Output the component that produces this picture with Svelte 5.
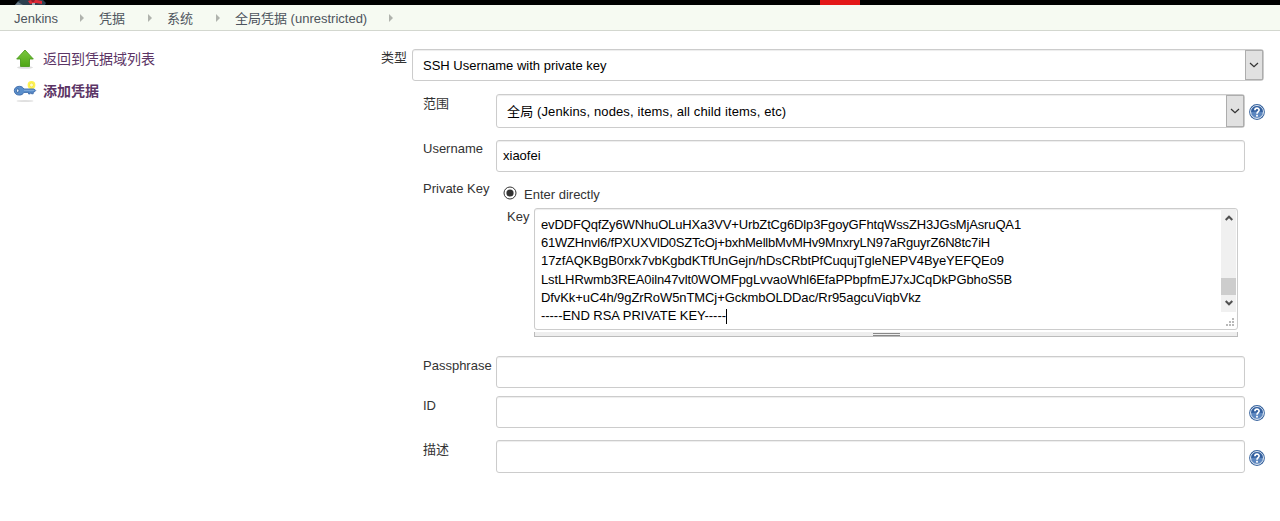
<script>
  const crumbs = [
    { label: 'Jenkins', width: 66 },
    { label: '凭据', width: 49 },
    { label: '系统', width: 49 },
    { label: '全局凭据 (unrestricted)', width: 154 }
  ];
  const keyLines = [
    { text: 'evDDFQqfZy6WNhuOLuHXa3VV+UrbZtCg6Dlp3FgoyGFhtqWssZH3JGsMjAsruQA1', width: 480 },
    { text: '61WZHnvl6/fPXUXVlD0SZTcOj+bxhMellbMvMHv9MnxryLN97aRguyrZ6N8tc7iH', width: 449 },
    { text: '17zfAQKBgB0rxk7vbKgbdKTfUnGejn/hDsCRbtPfCuqujTgleNEPV4ByeYEFQEo9', width: 463 },
    { text: 'LstLHRwmb3REA0iln47vlt0WOMFpgLvvaoWhl6EfaPPbpfmEJ7xJCqDkPGbhoS5B', width: 471 },
    { text: 'DfvKk+uC4h/9gZrRoW5nTMCj+GckmbOLDDac/Rr95agcuViqbVkz', width: 380 },
    { text: '-----END RSA PRIVATE KEY-----', width: 185 }
  ];

  // Spreads letter spacing so a line takes its nominal width.
  function fit(node, width) {
    const natural = node.getBoundingClientRect().width;
    node.style.letterSpacing = (width - natural) / node.textContent.length + 'px';
  }
</script>

{#snippet help()}
  <svg class="help" width="16" height="16" viewBox="0 0 16 16">
    <circle cx="8" cy="8" r="7.9" fill="#3a659f" />
    <circle cx="8" cy="8" r="6.4" fill="#5c86bf" stroke="#eef3f9" stroke-width="1" />
    <path d="M2.1 8a5.9 5.9 0 0 1 11.8 0Q8 7 2.1 8z" fill="#325f9f" />
    <path d="M5.9 6.2C5.900 3.500 10.100 3.500 10.100 6.100C10.100 7.700 8 7.600 8 9.800" fill="none" stroke="#fff" stroke-width="1.7" />
    <rect x="7.100" y="10.800" width="1.800" height="1.800" fill="#fff" />
  </svg>
{/snippet}

{#snippet chevron()}
  <span class="drop">
    <svg width="10" height="6" viewBox="0 0 10 6"><path d="M1 1l4 3.7L9 1" fill="none" stroke="#333" stroke-width="1.2" /></svg>
  </span>
{/snippet}

<div class="page">
  <header>
    <svg class="logo" width="34" height="5" viewBox="0 0 34 5">
      <path d="M1 5L4 1L6 0H29L32 3L31 5z" fill="#2c4050" />
      <path d="M1 5L4 2L9 5z" fill="#6c7c88" />
      <path d="M14 1l3-1h6l5 1v3l-6-1-6 1z" fill="#df2936" />
      <path d="M17 0h4l-1 2h-2z" fill="#931b29" />
      <path d="M18 3h3v2h-3z" fill="#a8b1b9" />
    </svg>
    <span class="alert"></span>
  </header>
  <nav>
    {#each crumbs as c}
      <span class="crumb" style:width="{c.width}px">{c.label}</span>
      <svg class="arrow" width="4" height="8" viewBox="0 0 4 8"><path d="M0 0l4 4-4 4z" fill="#b0b3ad" /></svg>
    {/each}
  </nav>
  <main>
    <aside>
      <a class="task">
        <svg width="24" height="24" viewBox="0 0 24 24">
          <defs>
            <linearGradient id="leaf" x1="0" y1="0" x2="0" y2="1"><stop offset="0" stop-color="#7cc840" /><stop offset="1" stop-color="#4fa615" /></linearGradient>
          </defs>
          <ellipse cx="12" cy="20.500" rx="8" ry="1.300" fill="#dedede" />
          <path d="M12 3l8.300 9H16.500v7.500H7.500V12H3.700z" fill="url(#leaf)" stroke="#4c9c1e" stroke-width=".9" />
        </svg>
        <span>返回到凭据域列表</span>
      </a>
      <a class="task active">
        <svg width="24" height="24" viewBox="0 0 24 24">
          <ellipse cx="12" cy="22" rx="8.500" ry="1" fill="#e0e0e0" />
          <circle cx="18.500" cy="6" r="3.900" fill="#fff34e" />
          <circle cx="18.500" cy="6" r="2" fill="#fffbc8" stroke="#f6e54a" />
          <path d="M6.300 7.300c2.500 0 3.900 1.300 4.600 2.700h10.300l1.500 1.500-1.500 1.600h-1v1.700h-1.700v-1.200h-1.300v1.300h-1.700v-1.500h-4.600c-.8 1.600-2.300 2.700-4.600 2.700C3.300 16.100 1.300 14.200 1.300 11.700S3.300 7.300 6.300 7.300z" fill="#5a8ecb" stroke="#3b69a8" stroke-width=".9" />
          <path d="M11 11.300h10" stroke="#8fb4de" stroke-width=".8" />
          <ellipse cx="4.800" cy="11.700" rx="1.200" ry="2" fill="#fff" stroke="#3465a4" />
        </svg>
        <span>添加凭据</span>
      </a>
    </aside>
    <section class="form">
      <div class="row type">
        <label>类型</label>
        <div class="field select"><span>SSH Username with private key</span>{@render chevron()}</div>
      </div>
      <div class="row scope">
        <label>范围</label>
        <div class="field select"><span>全局 (Jenkins, nodes, items, all child items, etc)</span>{@render chevron()}</div>
        {@render help()}
      </div>
      <div class="row user">
        <label>Username</label>
        <div class="field">xiaofei</div>
      </div>
      <div class="row secret">
        <label>Private Key</label>
        <div class="source">
          <div class="choice">
            <svg width="14" height="14" viewBox="0 0 14 14"><circle cx="7" cy="7" r="6" fill="#fff" stroke="#333" /><circle cx="7" cy="7" r="3.6" fill="#333" /></svg>
            <span>Enter directly</span>
          </div>
          <div class="keyrow">
            <label>Key</label>
            <div class="editor">
              <div class="area">
                <div class="lines">
                  {#each keyLines as line, i}
                    <div class="line"><span use:fit={line.width}>{line.text}</span>{#if i === keyLines.length - 1}<i class="caret"></i>{/if}</div>
                  {/each}
                </div>
                <div class="side">
                  <div class="scroll">
                    <svg width="8" height="6" viewBox="0 0 8 6"><path d="M.7 5L4 1.700 7.300 5" fill="none" stroke="#505050" stroke-width="2" /></svg>
                    <span class="thumb"></span>
                    <svg width="8" height="6" viewBox="0 0 8 6"><path d="M.7 1L4 4.300 7.300 1" fill="none" stroke="#505050" stroke-width="2" /></svg>
                  </div>
                  <svg class="grip" width="8" height="8" viewBox="0 0 8 8" fill="#b9b9b9"><path d="M6 0h2v2H6zM3 3h2v2H3zM6 3h2v2H6zM0 6h2v2H0zM3 6h2v2H3zM6 6h2v2H6z" /></svg>
                </div>
              </div>
              <div class="handle"><span></span></div>
            </div>
          </div>
        </div>
      </div>
      <div class="row pass">
        <label>Passphrase</label>
        <div class="field"></div>
      </div>
      <div class="row ident">
        <label>ID</label>
        <div class="field"></div>
        {@render help()}
      </div>
      <div class="row desc">
        <label>描述</label>
        <div class="field"></div>
        {@render help()}
      </div>
    </section>
  </main>
</div>

<style>
  :global(body) { margin: 0; background: #fff; }
  .page {
    width: 1280px; height: 521px; overflow: hidden; background: #fff;
    font: 13px/18px "Liberation Sans", "Noto Sans CJK SC", sans-serif; color: #333;
  }
  .page, .page * { box-sizing: border-box; }
  svg { display: block; flex: none; }
  header { display: flex; height: 5px; background: #000; }
  .logo { margin-left: 14px; }
  .alert { width: 40px; margin-left: 772px; background: #e31818; }
  nav {
    display: flex; align-items: center; height: 26px; padding-left: 14px;
    background: #f6faf2; border-bottom: 1px solid #d3d7cf; color: #4d545d;
  }
  .crumb { flex: none; white-space: nowrap; line-height: 25px; padding-top: 1px; }
  .arrow { margin-right: 15px; }
  main { display: flex; }
  aside { width: 370px; padding: 16px 0 0 13px; }
  .task { display: flex; align-items: center; height: 24px; margin-bottom: 8px; gap: 6px; font-size: 14px; color: #5c3566; }
  .active { font-weight: bold; }
  .form { width: 910px; padding-top: 18px; }
  .row { display: flex; align-items: flex-start; }
  .row > label { flex: none; width: 73px; white-space: nowrap; }
  .field {
    display: flex; align-items: center; justify-content: space-between; flex: none;
    width: 749px; height: 32px; padding-left: 6px; border: 1px solid #ccc; border-radius: 3px;
    box-shadow: inset 0 1px 1px rgba(0, 0, 0, .075); color: #000;
  }
  .select { padding-left: 10px; }
  .select > span:first-child { padding-top: 2px; }
  .drop {
    display: flex; align-items: center; justify-content: center; align-self: stretch;
    width: 18px; background: #e1e1e1; border: 1px solid #adadad;
  }
  .help { align-self: center; margin-left: 4px; }
  .type { padding-left: 11px; }
  .type > label { width: 31px; }
  .type .field { width: 852px; }
  .scope, .user, .secret, .pass, .ident, .desc { padding-left: 53px; }
  .scope { margin-top: 13px; }
  .scope > label, .pass > label, .ident > label, .desc > label { padding-top: 1px; }
  .scope .field { height: 34px; letter-spacing: .13px; }
  .scope .help { margin-top: 2px; }
  .user { margin-top: 12px; }
  .secret { height: 157px; margin-top: 8px; }
  .source { padding: 4px 0 0 7px; }
  .choice { display: flex; gap: 7px; height: 24px; }
  .choice svg { margin-top: 2px; }
  .choice span { margin-top: 2px; }
  .keyrow { display: flex; padding-left: 4px; }
  .keyrow > label { width: 27px; }
  .area {
    display: flex; justify-content: space-between; width: 704px; height: 122px;
    border: 1px solid #ccc; border-radius: 3px; box-shadow: inset 0 1px 1px rgba(0, 0, 0, .075); color: #000;
  }
  .lines { padding: 7px 0 0 6px; }
  .line { display: flex; align-items: center; height: 18.2px; white-space: nowrap; }
  .caret { width: 1px; height: 15px; background: #000; }
  .side { width: 16px; }
  .scroll { display: flex; flex-direction: column; align-items: center; height: 103px; width: 15px; padding: 6px 0 6px; background: #f0f0f0; }
  .thumb { width: 15px; height: 17px; margin: 57px 0 5px; background: #cdcdcd; }
  .grip { margin: 6px 0 0 5px; }
  .handle {
    display: flex; justify-content: center; width: 704px; height: 5px; margin-top: 2px;
    background: #eee; border: 1px solid #bbb; border-width: 0 1px 1px;
  }
  .handle span { width: 27px; height: 3px; margin-top: 1px; border: 1px solid #888; border-width: 1px 0; }
  .pass { margin-top: 19px; }
  .ident { margin-top: 8px; }
  .desc { margin-top: 12px; }
  .desc .field { height: 33px; }
  .ident .help, .desc .help { margin-top: 2px; }
</style>
